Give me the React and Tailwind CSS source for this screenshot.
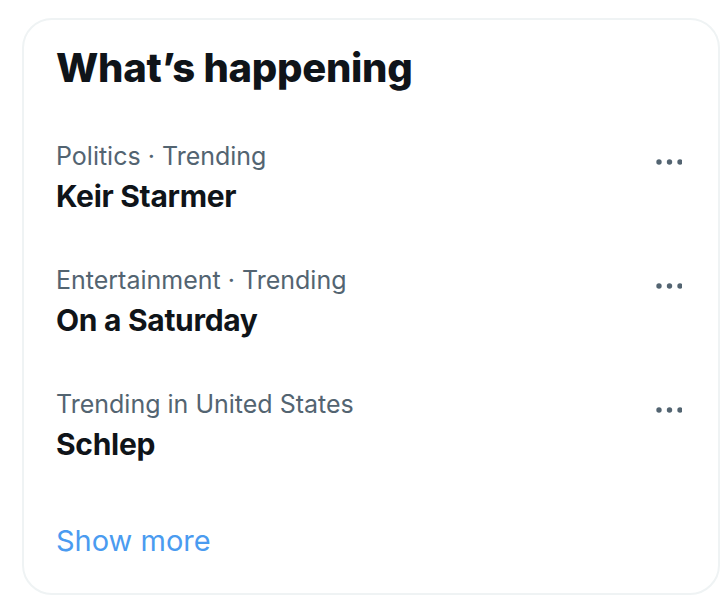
import React from "react";

const trends = [
  { meta: "Politics · Trending", name: "Keir Starmer" },
  { meta: "Entertainment · Trending", name: "On a Saturday" },
  { meta: "Trending in United States", name: "Schlep" },
];

function MoreDots() {
  return (
    <svg width="26" height="8" viewBox="0 0 26 8" className="text-[#536471]" fill="currentColor">
      <circle cx="3" cy="4" r="2.7" />
      <circle cx="13.5" cy="4" r="2.7" />
      <circle cx="24" cy="4" r="2.7" />
    </svg>
  );
}

export default function App() {
  return (
    <div className="w-[728px] h-[600px] bg-white pl-[22px] pt-[18px] font-['Inter','Noto_Sans',sans-serif]">
      <div className="w-[698px] rounded-[30px] border-2 border-[#eff3f4] bg-white">
        {/* cabecera */}
        <div className="px-[32px] pt-[24px] pb-[24px]">
          <h2 className="text-[40px] leading-[48px] font-extrabold text-[#0f1419] tracking-[-0.3px]">
            What’s happening
          </h2>
        </div>

        {trends.map((t) => (
          <div key={t.name} className="flex items-start justify-between px-[32px] py-[24px]">
            <div className="flex flex-col">
              <span className="text-[25px] leading-[32px] text-[#536471]">{t.meta}</span>
              <span className="mt-[4px] text-[30px] leading-[40px] font-bold text-[#0f1419] tracking-[-0.3px]">
                {t.name}
              </span>
            </div>
            <div className="mt-[18px] mr-[4px]">
              <MoreDots />
            </div>
          </div>
        ))}

        <div className="px-[32px] pt-[33px] pb-[32px]">
          <span className="text-[29px] leading-[40px] text-[#4a9bf0]">Show more</span>
        </div>
      </div>
    </div>
  );
}
